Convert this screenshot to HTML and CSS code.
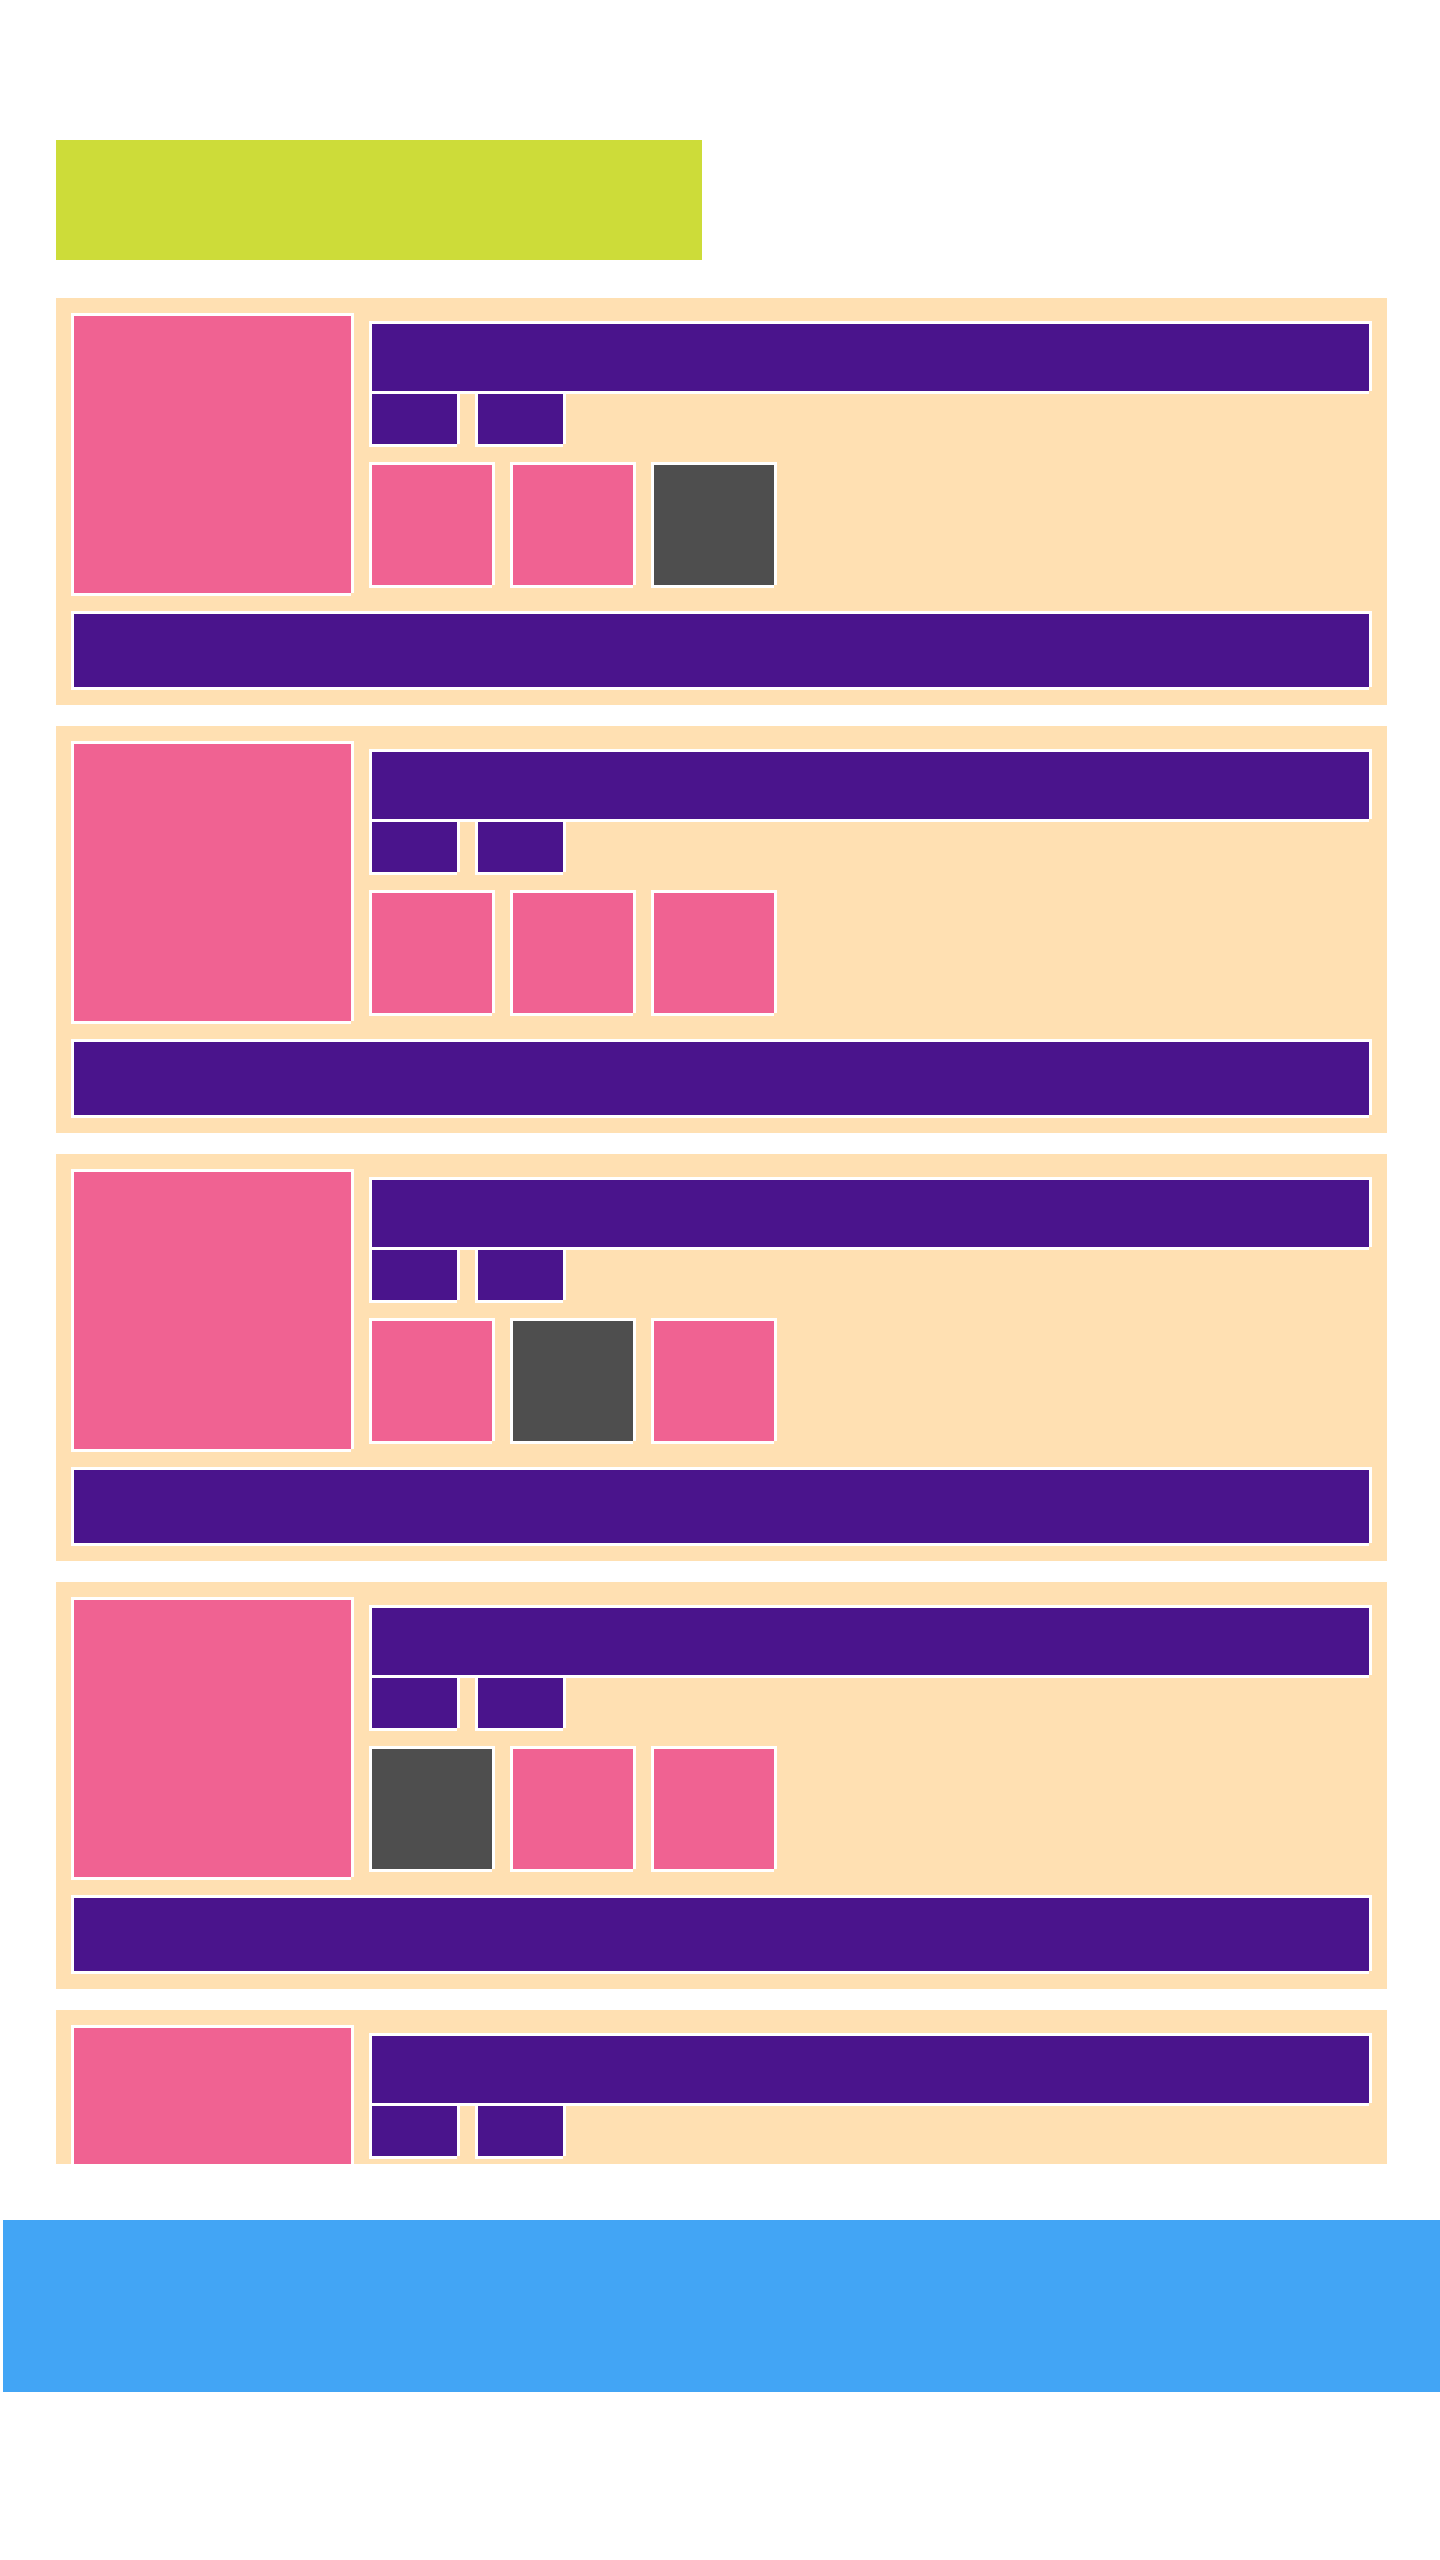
FILE: index.html
```html
<!DOCTYPE html>
<html>

<head>
  <title>Feed</title>
  <link rel="stylesheet" href="styles.css">
</head>

<body>
  <div class="banner"></div>

  <div class="feed">
    <div class="card">
      <div class="card-top">
        <div class="block thumb"></div>
        <div class="details">
          <div class="block title"></div>
          <div class="tags">
            <div class="block tag"></div>
            <div class="block tag"></div>
          </div>
          <div class="squares">
            <div class="block square"></div>
            <div class="block square"></div>
            <div class="block square dark"></div>
          </div>
        </div>
      </div>
      <div class="block bar"></div>
    </div>

    <div class="card">
      <div class="card-top">
        <div class="block thumb"></div>
        <div class="details">
          <div class="block title"></div>
          <div class="tags">
            <div class="block tag"></div>
            <div class="block tag"></div>
          </div>
          <div class="squares">
            <div class="block square"></div>
            <div class="block square"></div>
            <div class="block square"></div>
          </div>
        </div>
      </div>
      <div class="block bar"></div>
    </div>

    <div class="card">
      <div class="card-top">
        <div class="block thumb"></div>
        <div class="details">
          <div class="block title"></div>
          <div class="tags">
            <div class="block tag"></div>
            <div class="block tag"></div>
          </div>
          <div class="squares">
            <div class="block square"></div>
            <div class="block square dark"></div>
            <div class="block square"></div>
          </div>
        </div>
      </div>
      <div class="block bar"></div>
    </div>

    <div class="card">
      <div class="card-top">
        <div class="block thumb"></div>
        <div class="details">
          <div class="block title"></div>
          <div class="tags">
            <div class="block tag"></div>
            <div class="block tag"></div>
          </div>
          <div class="squares">
            <div class="block square dark"></div>
            <div class="block square"></div>
            <div class="block square"></div>
          </div>
        </div>
      </div>
      <div class="block bar"></div>
    </div>

    <div class="card">
      <div class="card-top">
        <div class="block thumb"></div>
        <div class="details">
          <div class="block title"></div>
          <div class="tags">
            <div class="block tag"></div>
            <div class="block tag"></div>
          </div>
          <div class="squares">
            <div class="block square"></div>
            <div class="block square"></div>
            <div class="block square"></div>
          </div>
        </div>
      </div>
      <div class="block bar"></div>
    </div>
  </div>

  <div class="footer"></div>
</body>

</html>
```

FILE: styles.css
```css
body {
  margin: 0;
  background-color: white;
  font-family: 'Liberation Sans', sans-serif;
}

.banner {
  margin: 140px 0 0 56px;
  width: 646px;
  height: 120px;
  background-color: #cddc39;
}

.feed {
  display: flex;
  flex-direction: column;
  gap: 21px;
  margin: 38px 0 0 56px;
  width: 1331px;
  height: 1866px;
  overflow: hidden;
  /* last card is cut off on purpose */
}

.card {
  flex-shrink: 0;
  background-color: #ffe0b2;
  padding: 15px 18px 18px 15px;
}

/* white frame: border on top/left, shadow on right/bottom */
.block {
  box-sizing: border-box;
  border-top: 3px solid white;
  border-left: 3px solid white;
  box-shadow: 3px 0 white, 0 3px white;
  background-color: #4a148c;
}

.card-top {
  display: flex;
  gap: 18px;
}

.thumb {
  flex-shrink: 0;
  width: 280px;
  height: 280px;
  background-color: #f06292;
}

.details {
  flex: 1;
  padding-top: 8px;
}

.title {
  height: 70px;
}

.tags {
  display: flex;
  gap: 18px;
}

.tag {
  width: 88px;
  height: 53px;
}

.squares {
  display: flex;
  gap: 18px;
  margin-top: 18px;
}

.square {
  width: 123px;
  height: 123px;
  background-color: #f06292;
}

.square.dark {
  background-color: #4e4e4e;
}

.bar {
  margin-top: 18px;
  height: 76px;
}

.footer {
  margin: 56px 0 0 3px;
  height: 172px;
  background-color: #42a5f5;
}
```
